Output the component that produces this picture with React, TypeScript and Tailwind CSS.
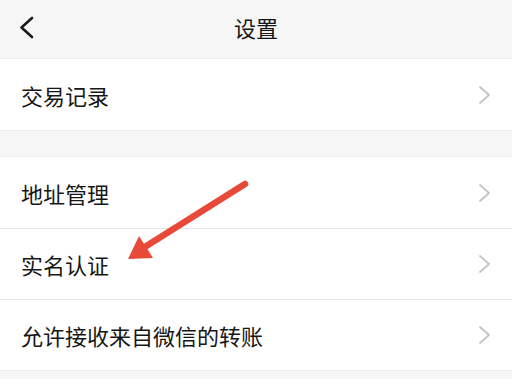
import { ReactNode } from 'react';

const font = { fontFamily: '"Noto Sans CJK SC", "Noto Sans", sans-serif' };

function Chevron() {
    return (
        <svg width="16" height="20" viewBox="0 0 16 20" className="shrink-0">
            <path d="M3 2 L12 10 L3 18" fill="none" stroke="#c4c4c4" strokeWidth="1.8" strokeLinecap="round" strokeLinejoin="round" />
        </svg>
    );
}

function Row({ children, border }: { children: ReactNode; border?: boolean }) {
    return (
        <div className={`flex h-[71px] items-center justify-between bg-white pl-[21px] pr-[19px] ${border ? 'border-t border-[#e6e6e6]' : ''}`}>
            <span className="text-[22px] leading-none text-[#161616]">{children}</span>
            <Chevron />
        </div>
    );
}

export default function App() {
    return (
        <div className="relative h-[379px] w-[512px] overflow-hidden bg-[#f6f6f6]" style={font}>
            {/* Header */}
            <div className="relative flex h-[59px] items-center justify-center border-b border-[#ececec] bg-[#f6f6f6] pb-[4px]">
                <svg width="18" height="24" viewBox="0 0 18 24" className="absolute left-[18px] top-[16px]">
                    <path d="M14 2 L3.5 11.5 L14 21" fill="none" stroke="#1a1a1a" strokeWidth="2.6" strokeLinecap="round" strokeLinejoin="round" />
                </svg>
                <span className="text-[22px] leading-none text-[#161616]">设置</span>
            </div>

            <Row>交易记录</Row>

            <div className="h-[26px] border-t border-[#ececec]" />

            <div className="border-t border-[#ececec]">
                <Row>地址管理</Row>
                <Row border>实名认证</Row>
                <Row border>允许接收来自微信的转账</Row>
            </div>
            <div className="border-t border-[#ececec]" />

            {/* Annotation arrow */}
            <svg width="512" height="379" className="pointer-events-none absolute left-0 top-0">
                <line x1="245" y1="184" x2="140" y2="250" stroke="#e84a39" strokeWidth="6.5" strokeLinecap="round" />
                <polygon points="128,259 139,236 153,258" fill="#e84a39" />
            </svg>
        </div>
    );
}
